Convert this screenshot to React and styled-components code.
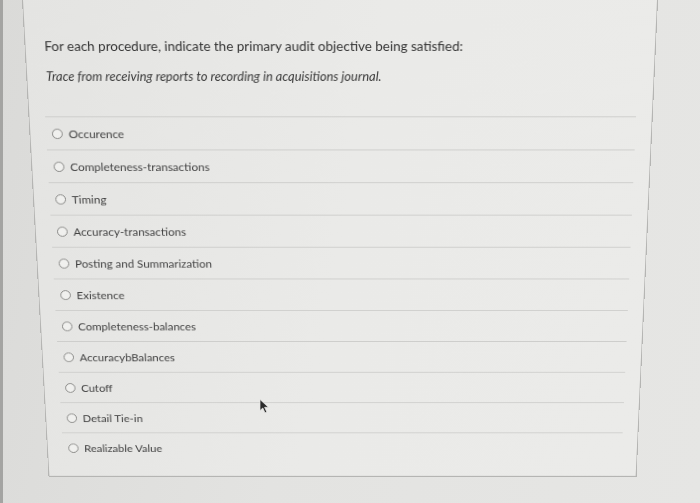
import React from "react";
import styled, { createGlobalStyle } from "styled-components";

const GlobalStyle = createGlobalStyle`
  html, body {
    margin: 0;
    padding: 0;
    background: #dfdfdd;
    overflow: hidden;
  }
`;

const Screen = styled.div`
  position: relative;
  width: 700px;
  height: 503px;
  overflow: hidden;
  box-sizing: border-box;
  padding-left: 22px;
  box-shadow: inset 3px 0 0 #a4a4a2;
  background: linear-gradient(100deg, #dadad8 0%, #e3e3e1 45%, #e6e6e4 100%);
  font-family: Lato, "Open Sans", sans-serif;
`;

// the photo was taken at an angle: tilt the sheet back a little
const Panel = styled.div`
  width: 636px;
  box-sizing: border-box;
  padding: 37px 16px 16px;
  background: linear-gradient(100deg, #e4e4e2 0%, #eaeae8 50%, #ebebe9 100%);
  border: 1px solid #b5b5b3;
  border-top: none;
  transform-origin: 50% 0;
  transform: perspective(1000px) rotateX(-9deg) skewX(0.3deg);
`;

const Question = styled.p`
  margin: 0 0 0 3px;
  font-size: 13.5px;
  line-height: 20px;
  color: #333;
`;

const Procedure = styled.p`
  margin: 11px 0 32px 3px;
  font-size: 13px;
  line-height: 20px;
  font-style: italic;
  color: #383838;
`;

const Options = styled.div`
  display: flex;
  flex-direction: column;
`;

const Option = styled.label`
  height: 35px;
  box-sizing: border-box;
  display: flex;
  align-items: center;
  gap: 6px;
  padding-left: 6px;
  border-top: 1px solid #cdcdcb;
  font-size: 12px;
  color: #424242;
`;

const Radio = styled.span`
  width: 11px;
  height: 11px;
  box-sizing: border-box;
  border-radius: 50%;
  border: 1.2px solid #858583;
  background: #f0f0ee;
`;

const Cursor = styled.svg`
  position: absolute;
  left: 259px;
  top: 399px;
  width: 11px;
  height: 15px;
  filter: blur(0.4px);
`;

const choices = [
  "Occurence",
  "Completeness-transactions",
  "Timing",
  "Accuracy-transactions",
  "Posting and Summarization",
  "Existence",
  "Completeness-balances",
  "AccuracybBalances",
  "Cutoff",
  "Detail Tie-in",
  "Realizable Value",
];

export default function App() {
  return (
    <>
      <GlobalStyle />
      <Screen>
        <Panel>
          <Question>
            For each procedure, indicate the primary audit objective being satisfied:
          </Question>
          <Procedure>
            Trace from receiving reports to recording in acquisitions journal.
          </Procedure>
          <Options>
            {choices.map((c) => (
              <Option key={c}>
                <Radio />
                {c}
              </Option>
            ))}
          </Options>
        </Panel>
        <Cursor viewBox="0 0 11 15">
          <path
            d="M1 0.5 L1 11.5 L3.8 9 L6 13.8 L7.8 13 L5.6 8.3 L9.4 8.3 Z"
            fill="#2a2a2a"
            stroke="#e8e8e6"
            strokeWidth="0.7"
          />
        </Cursor>
      </Screen>
    </>
  );
}
